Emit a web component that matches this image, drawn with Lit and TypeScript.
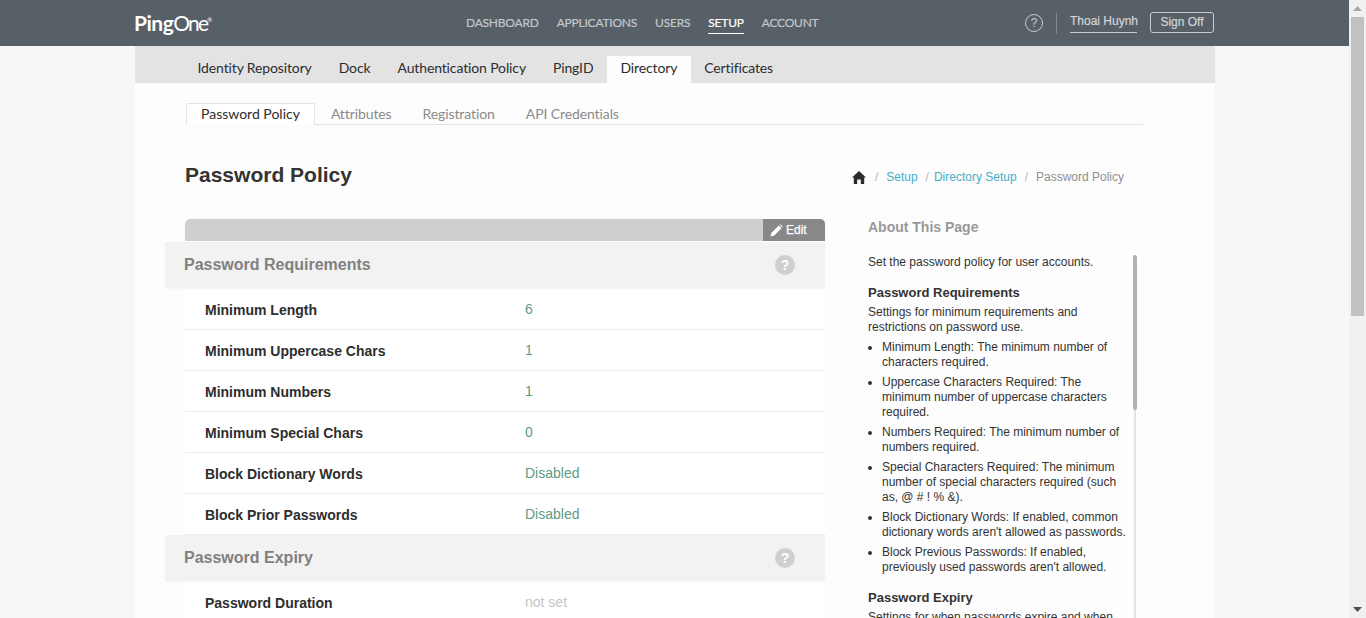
import { LitElement, html, css } from 'lit';
import { customElement } from 'lit/decorators.js';

const topNav = ['DASHBOARD', 'APPLICATIONS', 'USERS', 'SETUP', 'ACCOUNT'];
const mainTabs = ['Identity Repository', 'Dock', 'Authentication Policy', 'PingID', 'Directory', 'Certificates'];
const subTabs = ['Password Policy', 'Attributes', 'Registration', 'API Credentials'];

const requirements = [
  ['Minimum Length', '6'],
  ['Minimum Uppercase Chars', '1'],
  ['Minimum Numbers', '1'],
  ['Minimum Special Chars', '0'],
  ['Block Dictionary Words', 'Disabled'],
  ['Block Prior Passwords', 'Disabled'],
];

const helpItems = [
  'Minimum Length: The minimum number of characters required.',
  'Uppercase Characters Required: The minimum number of uppercase characters required.',
  'Numbers Required: The minimum number of numbers required.',
  'Special Characters Required: The minimum number of special characters required (such as, @ # ! % &).',
  "Block Dictionary Words: If enabled, common dictionary words aren't allowed as passwords.",
  "Block Previous Passwords: If enabled, previously used passwords aren't allowed.",
];

@customElement('app-root')
export class AppRoot extends LitElement {
  static styles = css`
    :host {
      display: flex;
      height: 618px;
      overflow: hidden;
      background: #f7f7f7;
      font-family: 'Liberation Sans', Arial, sans-serif;
    }

    .page {
      width: 1349px;
      flex: none;
    }

    /* top bar */
    .header {
      height: 46px;
      background: #575f67;
      display: flex;
      align-items: center;
      padding-left: 135px;
    }

    .logo {
      font-family: Lato, sans-serif;
      font-size: 21px;
      color: #fff;
      width: 331px;
      line-height: 46px;
      margin-left: -1px;
      margin-right: 1px;
    }

    .logo b {
      font-weight: 700;
      letter-spacing: -0.5px;
    }

    .logo span {
      font-weight: 400;
      letter-spacing: -1.8px;
    }

    .logo sup {
      font-size: 6px;
      vertical-align: 9px;
      line-height: 0;
    }

    .top-nav {
      display: flex;
      gap: 18px;
      width: 559px;
    }

    .top-nav a {
      font-family: Lato, sans-serif;
      font-size: 12px;
      letter-spacing: -0.22px;
      -webkit-text-stroke: 0.2px;
      color: #c4c7ca;
      padding: 3px 0 3px;
      border-bottom: 1px solid transparent;
    }

    .top-nav a.active {
      color: #fff;
      border-bottom-color: #fff;
    }

    .help {
      width: 16px;
      height: 16px;
      border: 1px solid #c9ccce;
      border-radius: 50%;
      color: #c9ccce;
      font-size: 12px;
      line-height: 16px;
      text-align: center;
    }

    .divider {
      width: 1px;
      height: 21px;
      background: #7f868c;
      margin: 0 13px 0 13px;
    }

    .user {
      font-size: 12px;
      color: #d3d5d7;
      -webkit-text-stroke: 0.2px;
      padding: 2px 0 4px;
      border-bottom: 1px solid #c9ccce;
      width: 67px;
      white-space: nowrap;
      margin-bottom: 1px;
    }

    .sign-off {
      margin: 0 0 1px 13px;
      width: 62px;
      height: 19px;
      border: 1px solid #c9ccce;
      border-radius: 3px;
      color: #d3d5d7;
      -webkit-text-stroke: 0.2px;
      font-size: 12px;
      line-height: 19px;
      text-align: center;
    }

    /* main white sheet */
    .sheet {
      width: 1080px;
      margin-left: 135px;
      height: 572px;
      background: #fdfdfd;
      overflow: hidden;
    }

    .main-tabs {
      height: 37px;
      padding: 10px 0 0 49px;
      box-sizing: border-box;
      background: #e3e3e3;
      display: flex;
    }

    .main-tabs a {
      font-family: Lato, sans-serif;
      font-size: 14px;
      letter-spacing: -0.13px;
      color: #2d2d2d;
      padding: 0 13.5px;
      line-height: 23px;
    }

    .main-tabs a.active {
      background: #fdfdfd;
    }

    .sub-tabs {
      margin: 20px 72px 0 51px;
      height: 21px;
      border-bottom: 1px solid #e3e3e3;
      display: flex;
      gap: 1px;
    }

    .sub-tabs a {
      font-family: Lato, sans-serif;
      font-size: 14px;
      letter-spacing: -0.1px;
      color: #8b8b8b;
      padding: 0 15px;
      line-height: 22px;
      height: 21px;
    }

    .sub-tabs a.active {
      color: #2d2d2d;
      background: #fff;
      letter-spacing: 0;
      border: 1px solid #e3e3e3;
      border-bottom: none;
      padding: 0 14px;
      line-height: 20px;
      height: 21px;
      border-radius: 2px 2px 0 0;
    }

    .title-row {
      display: flex;
      align-items: center;
      justify-content: space-between;
      margin: 37px 91px 0 50px;
      height: 28px;
    }

    h1 {
      margin: -2px 0 0;
      font-size: 21px;
      font-weight: 700;
      color: #333;
    }

    .crumbs {
      display: flex;
      align-items: center;
      font-size: 12px;
      color: #8f8f8f;
      padding-top: 2px;
    }

    .crumbs svg {
      margin-right: 9px;
    }

    .crumbs a {
      color: #45aec6;
    }

    .crumbs i {
      font-style: normal;
      color: #b5b5b5;
    }

    .crumbs .s1 {
      margin-right: 8px;
    }

    .crumbs .s2 {
      margin: 0 5px 0 8px;
    }

    .crumbs .s3 {
      margin: 0 8px 0 8px;
    }

    .columns {
      display: flex;
      margin-top: 29px;
      margin-left: 30px;
    }

    /* left form */
    .form {
      width: 660px;
      flex: none;
    }

    .edit-bar {
      margin-left: 20px;
      height: 22px;
      background: #cfcfcf;
      border-radius: 5px 5px 0 0;
      display: flex;
      justify-content: flex-end;
      overflow: hidden;
    }

    .edit {
      width: 62px;
      box-sizing: border-box;
      padding-left: 7px;
      background: #888;
      color: #fff;
      -webkit-text-stroke: 0.25px;
      font-size: 12px;
      display: flex;
      align-items: center;
      gap: 3px;
    }

    .section-head {
      height: 47px;
      background: #f2f2f2;
      display: flex;
      align-items: center;
      justify-content: space-between;
      padding: 0 30px 0 19px;
      font-size: 16px;
      font-weight: 700;
      color: #808080;
      border-bottom: 1px solid #f7f7f7;
      box-sizing: border-box;
    }

    .edit-bar + .section-head {
      margin-top: 1px;
    }

    .q {
      width: 20px;
      height: 20px;
      border-radius: 50%;
      background: #cfcfcf;
      color: #fff;
      font-size: 14px;
      font-weight: 700;
      line-height: 20px;
      text-align: center;
    }

    .row {
      margin-left: 20px;
      height: 41px;
      padding: 2px 0 0 20px;
      box-sizing: border-box;
      background: #fff;
      border-bottom: 1px solid #ececec;
      display: flex;
      align-items: center;
      font-size: 14px;
    }

    .row label {
      width: 320px;
      font-weight: 700;
      color: #2d2d2d;
    }

    .row span {
      color: #5d9b84;
      margin-top: -2px;
    }

    .row span.empty {
      color: #c6c6c6;
    }

    /* help panel */
    .about {
      margin-left: 43px;
      display: flex;
    }

    .about-text {
      width: 266px;
      box-sizing: border-box;
      padding-right: 4px;
      font-size: 12px;
      line-height: 15px;
      color: #333;
    }

    .about-text h2 {
      margin: 0 0 20px;
      font-size: 14px;
      line-height: 16px;
      color: #999;
    }

    .about-text h3 {
      margin: 15px 0 5px;
      font-size: 13px;
      line-height: 15px;
      font-weight: 700;
      color: #333;
    }

    .about-text p {
      margin: 0;
    }

    .about-text ul {
      margin: 5px 0 0;
      padding: 0 0 0 14px;
    }

    .about-text li {
      margin-bottom: 5px;
    }

    .about-track {
      width: 2px;
      margin-top: 36px;
      background: #e3e3e3;
      height: 400px;
    }

    .about-thumb {
      width: 4px;
      height: 155px;
      margin-left: -1px;
      border-radius: 2px;
      background: #b3b3b3;
    }

    /* window scrollbar */
    .scrollbar {
      width: 17px;
      flex: none;
      background: #f1f1f1;
      display: flex;
      flex-direction: column;
      align-items: center;
    }

    .arrow {
      height: 17px;
      display: flex;
      align-items: center;
      justify-content: center;
    }

    .thumb {
      width: 13px;
      height: 299px;
      background: #c1c1c1;
    }

    .spacer {
      flex: 1;
    }
  `;

  render() {
    return html`
      <div class="page">
        <div class="header">
          <div class="logo"><b>Ping</b><span>One</span><sup>®</sup></div>
          <nav class="top-nav">
            ${topNav.map(n => html`<a class="${n === 'SETUP' ? 'active' : ''}">${n}</a>`)}
          </nav>
          <div class="help">?</div>
          <div class="divider"></div>
          <div class="user">Thoai Huynh</div>
          <div class="sign-off">Sign Off</div>
        </div>
        <div class="sheet">
          <div class="main-tabs">
            ${mainTabs.map(t => html`<a class="${t === 'Directory' ? 'active' : ''}">${t}</a>`)}
          </div>
          <div class="sub-tabs">
            ${subTabs.map(t => html`<a class="${t === 'Password Policy' ? 'active' : ''}">${t}</a>`)}
          </div>
          <div class="title-row">
            <h1>Password Policy</h1>
            <div class="crumbs">
              <svg width="14" height="13" viewBox="0 0 14 13">
                <path d="M7 0 L14 6.6 L12.2 6.6 L12.2 13 L8.8 13 L8.8 8.6 L5.2 8.6 L5.2 13 L1.8 13 L1.8 6.6 L0 6.6 Z" fill="#2b2b2b"></path>
              </svg>
              <i class="s1">/</i><a>Setup</a><i class="s2">/</i><a>Directory Setup</a><i class="s3">/</i>Password Policy
            </div>
          </div>
          <div class="columns">
            <div class="form">
              <div class="edit-bar">
                <div class="edit">
                  <svg width="13" height="13" viewBox="0 0 13 13">
                    <path d="M0.5 12.5 L1.3 9 L8.8 1.5 L11.5 4.2 L4 11.7 Z M9.6 0.8 L10.4 0.3 L12.7 2.6 L12.2 3.4 Z" fill="#fff"></path>
                  </svg>
                  Edit
                </div>
              </div>
              <div class="section-head">Password Requirements<div class="q">?</div></div>
              ${requirements.map(([k, v]) => html`<div class="row"><label>${k}</label><span>${v}</span></div>`)}
              <div class="section-head">Password Expiry<div class="q">?</div></div>
              <div class="row"><label>Password Duration</label><span class="empty">not set</span></div>
            </div>
            <div class="about">
              <div class="about-text">
                <h2>About This Page</h2>
                <p>Set the password policy for user accounts.</p>
                <h3>Password Requirements</h3>
                <p>Settings for minimum requirements and restrictions on password use.</p>
                <ul>${helpItems.map(i => html`<li>${i}</li>`)}</ul>
                <h3>Password Expiry</h3>
                <p>Settings for when passwords expire and when</p>
              </div>
              <div class="about-track"><div class="about-thumb"></div></div>
            </div>
          </div>
        </div>
      </div>
      <div class="scrollbar">
        <div class="arrow"><svg width="9" height="5"><path d="M4.5 0 L9 5 L0 5 Z" fill="#a8a8a8"></path></svg></div>
        <div class="thumb"></div>
        <div class="spacer"></div>
        <div class="arrow"><svg width="9" height="5"><path d="M0 0 L9 0 L4.5 5 Z" fill="#505050"></path></svg></div>
      </div>
    `;
  }
}
